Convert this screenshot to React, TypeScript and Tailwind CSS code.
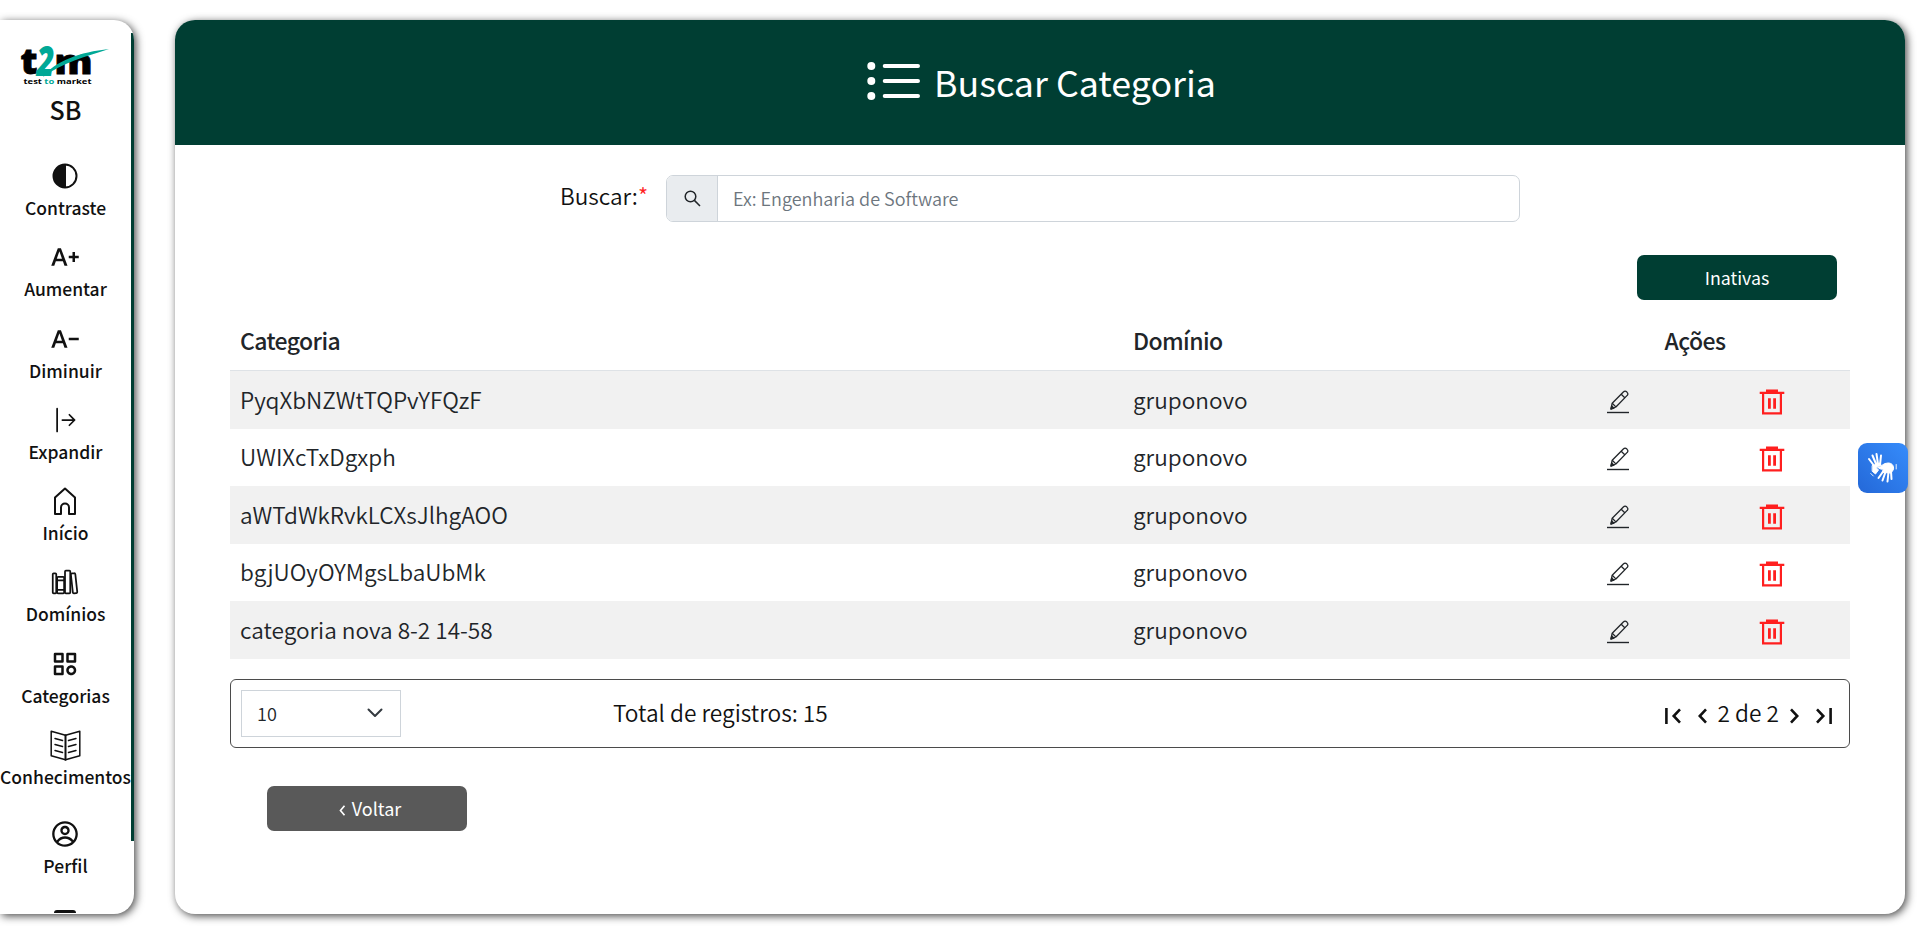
import React from "react";
import { BsArrowBarRight } from "react-icons/bs";
import { IoLibraryOutline } from "react-icons/io5";
import { BiCategory } from "react-icons/bi";
import { CgProfile } from "react-icons/cg";
import { MdTextIncrease, MdTextDecrease } from "react-icons/md";

function Logo() {
  return (
    <svg width="94" height="42" viewBox="0 0 94 42" className="block overflow-visible">
      <g fontFamily="Open Sans" fontWeight="800">
        <text x="2.500" y="29" fontSize="35" textLength="17" lengthAdjust="spacingAndGlyphs" fill="#000" stroke="#000" strokeWidth="0.8">t</text>
        <text x="36.500" y="29" fontSize="33" textLength="38" lengthAdjust="spacingAndGlyphs" fill="#000" stroke="#000" strokeWidth="0.8">m</text>
        <text x="18.500" y="31" fontSize="42" textLength="18" lengthAdjust="spacingAndGlyphs" fill="#00a896" fontStyle="italic">2</text>
        <text x="5.500" y="38.500" fontSize="7.500" textLength="68" lengthAdjust="spacingAndGlyphs" fontWeight="700">
          test <tspan fill="#00a896">to</tspan> market
        </text>
      </g>
      <path d="M25 32 C37 16 62 7 91 4 C66 12 46 17 25 32Z" fill="#00a896" />
    </svg>
  );
}

function HalfCircle() {
  return (
    <svg width="26" height="26" viewBox="0 0 26 26">
      <circle cx="13" cy="13" r="11.500" fill="none" stroke="#111" strokeWidth="2" />
      <path d="M14 1.500v23h-1a11.500 11.500 0 0 1 0-23z" fill="#111" />
    </svg>
  );
}

function House() {
  return (
    <svg width="24" height="29" viewBox="0 0 24 29" fill="none" stroke="#111" strokeWidth="2" strokeLinejoin="round">
      <path d="M2 27V10.500L12 1.500l10 9V27h-6v-6.500a4 4 0 0 0-8 0V27z" />
    </svg>
  );
}

function OpenBook() {
  return (
    <svg width="31" height="31" viewBox="0 0 31 31" fill="none" stroke="#111" strokeWidth="1.500" strokeLinejoin="round" strokeLinecap="round">
      <path d="M15.500 5.200L1.200 1.200V25.800L15.500 29.800L29.800 25.800V1.200z" />
      <path d="M15.500 5.200V29.800" strokeWidth="2" />
      <path d="M5 8.500l7.500 2M5 14.500l7.500 2M5 20.500l7.500 2M26 8.500l-7.500 2M26 14.500l-7.500 2M26 20.500l-7.500 2" />
    </svg>
  );
}

function ListIcon() {
  return (
    <svg width="54" height="38" viewBox="0 0 54 38" fill="#fff">
      <circle cx="4.300" cy="4" r="4" />
      <circle cx="4.300" cy="19" r="4" />
      <circle cx="4.300" cy="34" r="4" />
      <path d="M17.700 4H51M17.700 19H51M17.700 34H51" stroke="#fff" strokeWidth="4" strokeLinecap="round" />
    </svg>
  );
}

function SearchIcon() {
  return (
    <svg width="17" height="17" viewBox="0 0 17 17" fill="none" stroke="#212529" strokeWidth="1.500">
      <circle cx="6.500" cy="6.500" r="5.300" />
      <path d="M10.400 10.400L16 16" />
    </svg>
  );
}

function Pencil() {
  return (
    <svg width="24" height="26" viewBox="0 0 24 26" fill="none" stroke="#212529" strokeWidth="1.300" strokeLinejoin="round">
      <path d="M5 20l1.200-5.800L17.600 2.800a2 2 0 0 1 3 0l.6.600a2 2 0 0 1 0 3L9.900 18z" />
      <path d="M15.200 5.200l3.600 3.600M6.200 14.200l3.700 3.700" />
      <path d="M5 20l.7-3 2.200 2.200z" fill="#212529" />
      <path d="M1 23.500h22" strokeWidth="1.400" />
    </svg>
  );
}

function Trash() {
  return (
    <svg width="26" height="26" viewBox="0 0 26 26" fill="#ff1f1f">
      <path d="M7 .500h12v2.200h6.300v2.300H.700v-2.300H7z" />
      <path d="M3 4h20v21.500H3zM5.200 5v18.300h15.600V5z" fillRule="evenodd" />
      <path d="M9 9.300h2.800v10.400H9zM14.200 9.300H17v10.400h-2.800z" />
    </svg>
  );
}

function SigningHands() {
  return (
    <svg width="50" height="50" viewBox="0 0 50 50" fill="none" stroke="#fff" strokeLinecap="round" strokeLinejoin="round">
      <path d="M11 16L17 24M14.500 12.500L18.500 22M18.500 11L20 21M23 12.500L22 22" strokeWidth="2" />
      <path d="M14.500 22.500L22 20l1 2-5 2.500 2.500 2.500-3 4-3-2.500z" fill="#fff" strokeWidth="1" />
      <path d="M20 24.500c4-1 5-4.500 10-4.500 4 0 6 2.500 5.500 6.500L33 30l-9-.500 1.500-3.500c-2 .500-4 0-5.500-1.500z" fill="#fff" strokeWidth="1" />
      <path d="M25.500 28L20.500 35M27.500 29L24.500 37.500M30.500 29L29.500 38.500M33 28L33.500 36" strokeWidth="2" />
      <path d="M38.200 21.500v4.500M12.800 30.500l2.500 2.500" strokeWidth="0.900" />
    </svg>
  );
}

function PageArrow({ bar = false, flip = false }: { bar?: boolean; flip?: boolean }) {
  return (
    <svg
      width={bar ? 16 : 9}
      height="16"
      viewBox={bar ? "0 0 16 16" : "7 0 9 16"}
      fill="none"
      stroke="#111"
      strokeWidth="2.600"
      className={flip ? "-scale-x-100" : ""}
    >
      <path d="M15 1.300L8.700 8L15 14.700" />
      {bar && <path d="M1.400 0V16" />}
    </svg>
  );
}

function NavItem({ label, icon, tall = false }: { label: string; icon: React.ReactNode; tall?: boolean }) {
  return (
    <a className={tall ? "flex h-[90px] flex-col items-center pt-[8px]" : "flex h-[81.300px] flex-col items-center"}>
      <span className="flex h-[34px] items-center justify-center">{icon}</span>
      <span className="mt-[2px] text-[17.500px] font-medium leading-[26px]">{label}</span>
    </a>
  );
}

const rows = [
  "PyqXbNZWtTQPvYFQzF",
  "UWIXcTxDgxph",
  "aWTdWkRvkLCXsJlhgAOO",
  "bgjUOyOYMgsLbaUbMk",
  "categoria nova 8-2 14-58",
];

export default function App() {
  return (
    <div className="relative flex h-[934px] w-[1920px] overflow-hidden bg-white py-5 font-['Noto_Sans_CJK_JP','Noto_Sans',sans-serif] text-[#111]">
      <aside className="h-[894px] w-[134px] shrink-0 overflow-hidden rounded-r-[20px] bg-white shadow-[2px_2px_8px_#000000b8]">
        <div className="flex">
          <div className="flex w-[131px] shrink-0 flex-col items-center">
            <div className="mt-[25px] mr-[1px]">
              <Logo />
            </div>
            <div className="mt-[5px] text-[25px] font-medium leading-[34px]">SB</div>
            <nav className="mt-[33px] flex flex-col items-center">
              <NavItem label="Contraste" icon={<HalfCircle />} />
              <NavItem label="Aumentar" icon={<MdTextIncrease size={30} />} />
              <NavItem label="Diminuir" icon={<MdTextDecrease size={30} />} />
              <NavItem label="Expandir" icon={<BsArrowBarRight size={28} />} />
              <NavItem label="Início" icon={<House />} />
              <NavItem label="Domínios" icon={<IoLibraryOutline size={28} />} />
              <NavItem label="Categorias" icon={<BiCategory size={30} />} />
              <NavItem label="Conhecimentos" icon={<OpenBook />} />
              <NavItem tall label="Perfil" icon={<CgProfile size={28} />} />
              <span className="mt-[11px] h-[3px] w-[22px] rounded-t bg-[#111]" />
            </nav>
          </div>
          <div className="mt-[13px] h-[808px] w-[3px] bg-[#003e33]" />
        </div>
      </aside>

      <main className="ml-[41px] flex h-[894px] w-[1730px] shrink-0 flex-col overflow-hidden rounded-[20px] bg-white shadow-[2px_2px_8px_#000000b8]">
        <header className="flex h-[125px] shrink-0 items-center justify-center gap-[13px] bg-[#003e33] pl-[3px] text-white">
          <span className="pb-[3px]">
            <ListIcon />
          </span>
          <h1 className="pb-[3px] text-[35.800px] font-normal leading-[54px]">Buscar Categoria</h1>
        </header>

        <div className="mt-[30px] flex h-[47px] pl-[385px]">
          <label className="flex w-[106px] items-start pt-[3px] text-[22.600px] font-[350] leading-[36px]">
            Buscar:<span className="-mt-[1px] text-[22px] leading-[36px] text-[#ff1f1f]">*</span>
          </label>
          <div className="flex w-[854px] overflow-hidden rounded-[7px] border border-[#ced4da]">
            <span className="flex w-[51px] items-center justify-center border-r border-[#ced4da] bg-[#e9ecef]">
              <SearchIcon />
            </span>
            <span className="flex items-center pl-[15px] text-[18px] font-[350] text-[#6c757d]">Ex: Engenharia de Software</span>
          </div>
        </div>

        <div className="mt-[33px] flex justify-end pr-[68px]">
          <button className="h-[45px] w-[200px] rounded-[7px] bg-[#003e33] text-[17.800px] text-white">Inativas</button>
        </div>

        <section className="mx-[55px] mt-[13px]">
          <div className="flex h-[58px] items-center border-b border-[#dee2e6] pb-[3px] text-[23px] font-medium tracking-[-0.600px] text-[#212529]">
            <span className="w-[893px] pl-[10px]">Categoria</span>
            <span className="w-[417px] pl-[10px]">Domínio</span>
            <span className="w-[310px] text-center">Ações</span>
          </div>
          {rows.map((r, i) => (
            <div
              key={r}
              className={
                i % 2 === 0
                  ? "flex h-[57.500px] items-center bg-[#f1f1f1] text-[22.600px] font-[350] text-[#212529]"
                  : "flex h-[57.500px] items-center text-[22.600px] font-[350] text-[#212529]"
              }
            >
              <span className="w-[893px] pl-[10px]">{r}</span>
              <span className="w-[417px] pl-[10px]">gruponovo</span>
              <span className="flex w-[155px] justify-center pt-[4px]">
                <Pencil />
              </span>
              <span className="flex w-[153px] justify-center pt-[4px]">
                <Trash />
              </span>
            </div>
          ))}
        </section>

        <div className="mx-[55px] mt-[20px] flex h-[69px] items-center rounded-[6px] border border-[#4b4b4b] pl-[10px] pr-[17px] text-[22.700px] font-[350]">
          <div className="flex h-[47px] w-[160px] items-center justify-between border border-[#ced4da] pl-[15px] pr-[17px] text-[18px] text-[#212529]">
            <span className="pt-[1px]">10</span>
            <svg width="16" height="10" viewBox="0 0 16 10" fill="none" stroke="#343a40" strokeWidth="2" strokeLinecap="round" strokeLinejoin="round">
              <path d="M1.500 1.500L8 8l6.500-6.500" />
            </svg>
          </div>
          <span className="ml-[212px] pt-[1px]">Total de registros: 15</span>
          <div className="ml-auto flex items-center">
            <span className="pt-[6px]">
              <PageArrow bar />
            </span>
            <span className="ml-[17px] pt-[6px]">
              <PageArrow />
            </span>
            <span className="mx-[11px] pt-[1px]">2 de 2</span>
            <span className="pt-[6px]">
              <PageArrow flip />
            </span>
            <span className="ml-[17px] pt-[6px]">
              <PageArrow bar flip />
            </span>
          </div>
        </div>

        <button className="mt-[38px] ml-[92px] flex h-[45px] w-[200px] shrink-0 items-center justify-center gap-[6px] rounded-[7px] bg-[#595959] pl-[6px] text-[18px] text-white">
          <svg width="7" height="11" viewBox="0 0 7 11" fill="none" stroke="#fff" strokeWidth="1.700" className="mt-[4px]">
            <path d="M5.500 0.800L1.500 5.500L5.500 10.200" />
          </svg>
          <span>Voltar</span>
        </button>
      </main>

      <div className="absolute top-[443px] left-[1858px] size-[50px] rounded-[9px] bg-linear-to-tr from-[#2468d8] to-[#368cfb]">
        <SigningHands />
      </div>
    </div>
  );
}
